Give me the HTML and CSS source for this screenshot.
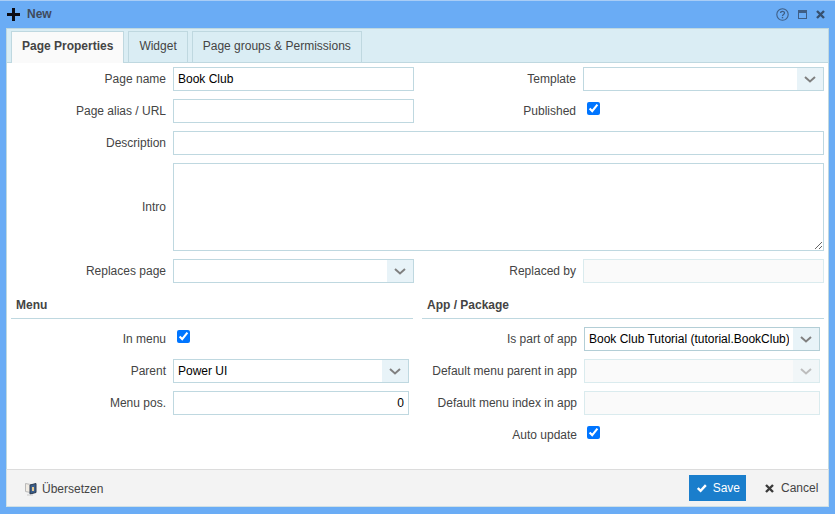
FILE: index.html
```html
<!DOCTYPE html>
<html lang="en">
<head>
    <meta charset="UTF-8">
    <meta name="viewport" content="width=device-width, initial-scale=1.0">
    <title>New</title>
    <link rel="stylesheet" href="styles.css">
</head>
<body>

<div class="dialog">
    <!-- title bar -->
    <div class="titlebar">
        <svg class="title-plus" width="13" height="13" viewBox="0 0 13 13"><path d="M5 0h3v5h5v3H8v5H5V8H0V5h5z" fill="#0c0c14"/></svg>
        <span class="title-text">New</span>
        <div class="title-tools">
            <svg width="13" height="13" viewBox="0 0 13 13"><circle cx="6.5" cy="6.5" r="5.7" fill="none" stroke="#3f5f86" stroke-width="1.1"/><path d="M4.6 5.1c0-2.3 3.900-2.300 3.900-.1 0 1.500-2 1.400-2 3" fill="none" stroke="#3f5f86" stroke-width="1.300"/><rect x="5.800" y="8.900" width="1.400" height="1.400" fill="#3f5f86"/></svg>
            <svg width="9" height="9" viewBox="0 0 9 9"><path d="M0 0h9v9H0z" fill="#3f5f86"/><path d="M1 3h7v5H1z" fill="#6aacf5"/></svg>
            <svg width="9" height="9" viewBox="0 0 9 9"><path d="M1 1l7 7M8 1L1 8" stroke="#36506f" stroke-width="2.400"/></svg>
        </div>
    </div>

    <!-- tabs -->
    <div class="tabs">
        <div class="tab active">Page Properties</div>
        <div class="tab">Widget</div>
        <div class="tab">Page groups &amp; Permissions</div>
    </div>

    <div class="content">
        <div class="fields">
            <label>Page name</label>
            <input type="text" value="Book Club">
            <label>Template</label>
            <div class="select"><input type="text"><span class="arrow"><svg width="12" height="7" viewBox="0 0 12 7"><path d="M1 1l5 4.500L11 1" fill="none" stroke="#808080" stroke-width="2"/></svg></span></div>

            <label>Page alias / URL</label>
            <input type="text">
            <label>Published</label>
            <div class="check-cell"><input type="checkbox" checked></div>

            <label>Description</label>
            <input type="text" class="wide">

            <label>Intro</label>
            <textarea class="wide"></textarea>

            <label>Replaces page</label>
            <div class="select"><input type="text"><span class="arrow"><svg width="12" height="7" viewBox="0 0 12 7"><path d="M1 1l5 4.500L11 1" fill="none" stroke="#808080" stroke-width="2"/></svg></span></div>
            <label>Replaced by</label>
            <input type="text" class="off" disabled>
        </div>

        <div class="sections">
            <section class="section">
                <h3>Menu</h3>
                <div class="rows">
                    <label>In menu</label>
                    <div class="check-cell"><input type="checkbox" checked></div>
                    <label>Parent</label>
                    <div class="select"><input type="text" value="Power UI"><span class="arrow"><svg width="12" height="7" viewBox="0 0 12 7"><path d="M1 1l5 4.500L11 1" fill="none" stroke="#808080" stroke-width="2"/></svg></span></div>
                    <label>Menu pos.</label>
                    <input type="text" class="num" value="0">
                </div>
            </section>
            <section class="section app">
                <h3>App / Package</h3>
                <div class="rows">
                    <label>Is part of app</label>
                    <div class="select strong"><input type="text" value="Book Club Tutorial (tutorial.BookClub)"><span class="arrow"><svg width="12" height="7" viewBox="0 0 12 7"><path d="M1 1l5 4.500L11 1" fill="none" stroke="#808080" stroke-width="2"/></svg></span></div>
                    <label>Default menu parent in app</label>
                    <div class="select disabled"><input type="text" class="off" disabled><span class="arrow"><svg width="12" height="7" viewBox="0 0 12 7"><path d="M1 1l5 4.500L11 1" fill="none" stroke="#bdbdbd" stroke-width="2"/></svg></span></div>
                    <label>Default menu index in app</label>
                    <input type="text" class="off" disabled>
                    <label>Auto update</label>
                    <div class="check-cell"><input type="checkbox" checked></div>
                </div>
            </section>
        </div>
    </div>

    <!-- footer -->
    <div class="footer">
        <a class="translate">
            <svg width="13" height="14" viewBox="0 0 13 14"><path d="M1.500 1.500l5 1v8l-5-1z" fill="#f1ece4" stroke="#b9b9b9"/><path d="M6 3l6-1.500v9L6 12z" fill="#3c5f8c" stroke="#2b3a50"/><path d="M8 5h2v4H8z" fill="#e8c98d"/><path d="M3 13h6" stroke="#c9c9c9"/></svg>
            Übersetzen
        </a>
        <div class="footer-buttons">
            <button class="save"><svg width="12" height="10" viewBox="0 0 12 10"><path d="M1 5l3.500 3.500L11 1.500" fill="none" stroke="#fff" stroke-width="3"/></svg>Save</button>
            <button class="cancel"><svg width="9" height="9" viewBox="0 0 9 9"><path d="M1 1l7 7M8 1L1 8" stroke="#3a3a3a" stroke-width="2.400"/></svg>Cancel</button>
        </div>
    </div>
</div>

</body>
</html>
```

FILE: styles.css
```css
html, body {
    margin: 0;
    height: 100%;
}
body {
    font-family: "Liberation Sans", Arial, sans-serif;
    font-size: 12px;
    color: #444;
    background-color: #fff;
    overflow: hidden;
}
* {
    box-sizing: border-box;
}
.dialog {
    width: 835px;
    height: 514px;
    background-color: #6aacf5;
    border-top: 1px solid #a9cdf6;
    padding: 0 6px 7px;
    display: flex;
    flex-direction: column;
}

/* title bar */
.titlebar {
    height: 27px;
    flex: none;
    display: flex;
    align-items: center;
    padding: 0 0 1px 1px;
}
.title-text {
    font-weight: bold;
    margin-left: 7px;
    color: #3f4a5c;
}
.title-tools {
    margin-left: auto;
    margin-right: 4px;
    display: flex;
    align-items: center;
    gap: 9px;
}

/* tabs */
.tabs {
    height: 35px;
    flex: none;
    display: flex;
    align-items: flex-end;
    gap: 4px;
    padding-left: 4px;
    background-color: #daedf4;
    border: 1px solid #bfd8e0;
}
.tab {
    height: 31px;
    line-height: 29px;
    padding: 0 10px;
    border: 1px solid #bfd8e0;
    border-bottom: none;
}
.tab.active {
    height: 32px;
    margin-bottom: -1px;
    background-color: #fafafa;
    font-weight: bold;
}

/* form */
.content {
    flex: 1;
    background-color: #fff;
    border-left: 1px solid #bfd8e0;
    border-right: 1px solid #bfd8e0;
}
label {
    text-align: right;
    line-height: 24px;
}
input[type="text"], textarea {
    display: block;
    width: 100%;
    height: 24px;
    border: 1px solid #bfd8e0;
    padding: 0 4px;
    font-family: inherit;
    font-size: 12px;
    color: #000;
    background-color: #fff;
    outline: none;
    border-radius: 0;
}
input[type="text"].off {
    background-color: #fafafa;
    border-color: #daebee;
}
.num {
    text-align: right;
}
.fields {
    display: grid;
    grid-template-columns: 159px 241px 155px 241px;
    column-gap: 7px;
    row-gap: 8px;
    padding-top: 4px;
}
.wide {
    grid-column: 2 / 5;
}
textarea.wide {
    height: 88px;
    resize: both;
}
.fields label:has(+ textarea) {
    line-height: 88px;
}
.select {
    display: flex;
    position: relative;
    height: 24px;
}
.select input[type="text"] {
    flex: 1;
    min-width: 0;
    padding-right: 30px;
}
.select .arrow {
    position: absolute;
    right: 1px;
    top: 1px;
    bottom: 1px;
    width: 26px;
    display: flex;
    align-items: center;
    justify-content: center;
    background-color: #e8f3f8;
}
.select.strong input[type="text"] {
    border-color: #b3ced6;
}
.select.disabled .arrow {
    background-color: #f1f6f8;
}
.check-cell {
    height: 24px;
    display: flex;
    align-items: center;
}
.check-cell input {
    margin: 0 0 5px 4px;
    width: 13px;
    height: 13px;
}
.app .check-cell input {
    margin-left: 3px;
}
.sections {
    display: grid;
    grid-template-columns: 402px 402px;
    column-gap: 9px;
    padding-left: 4px;
}
.section h3 {
    margin: 0;
    height: 36px;
    padding: 14px 0 0 5px;
    font-size: 12px;
    line-height: 17px;
    border-bottom: 1px solid #bfd8e0;
}
.rows {
    display: grid;
    grid-template-columns: 155px 236px;
    column-gap: 7px;
    row-gap: 8px;
    padding-top: 8px;
}

/* footer */
.footer {
    height: 38px;
    flex: none;
    display: flex;
    align-items: center;
    justify-content: space-between;
    background-color: #f3f3f3;
    border-top: 1px solid #dcdcdc;
    border-bottom: 1px solid #cfe0e6;
    border-left: 1px solid #cfe0e6;
    border-right: 1px solid #cfe0e6;
    padding-left: 17px;
}
.translate {
    display: flex;
    align-items: center;
    gap: 5px;
    padding-top: 2px;
}
.footer-buttons {
    display: flex;
    align-items: center;
    height: 26px;
}
button {
    height: 26px;
    border: none;
    font-family: inherit;
    font-size: 12px;
    cursor: pointer;
    display: flex;
    align-items: center;
}
.save {
    width: 57px;
    padding-left: 8px;
    gap: 6px;
    background-color: #1a7ecc;
    color: #fff;
}
.cancel {
    width: 82px;
    padding-left: 19px;
    gap: 7px;
    background: none;
    color: #444;
}
```
